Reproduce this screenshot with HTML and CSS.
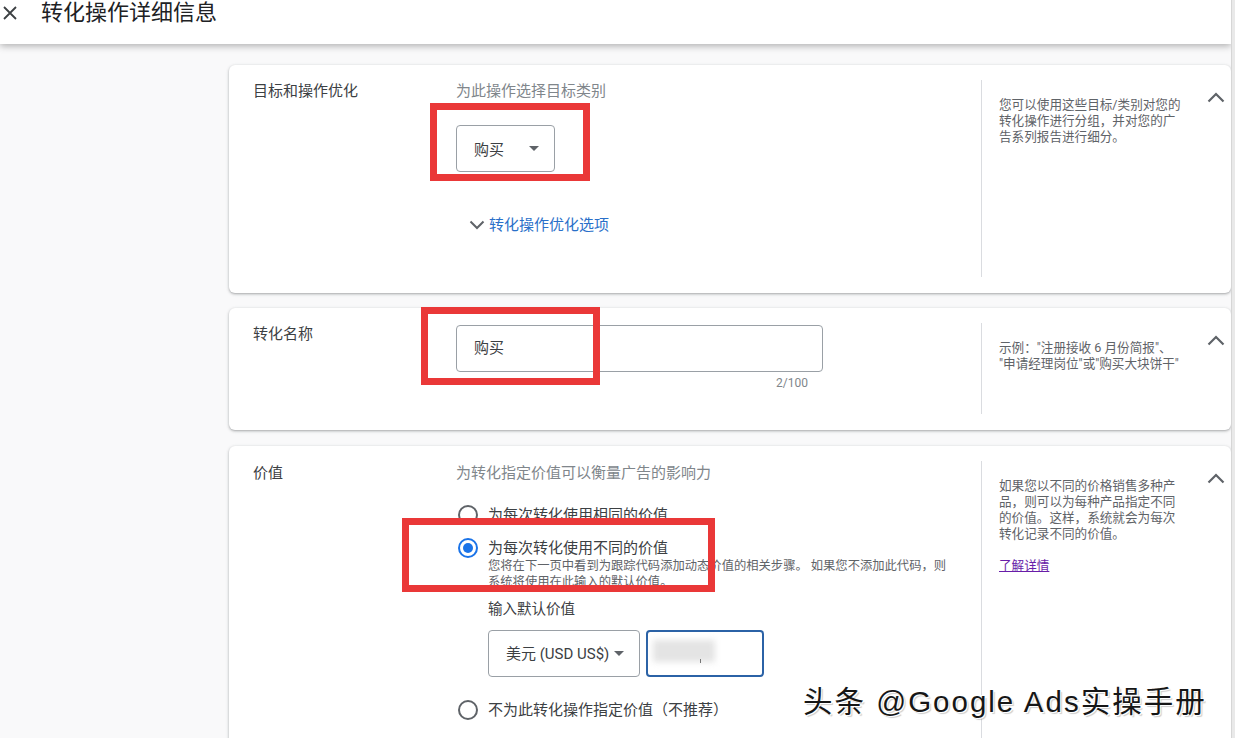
FILE: index.html
```html
<!DOCTYPE html>
<html lang="zh-CN">
<head>
    <meta charset="UTF-8">
    <title>转化操作详细信息</title>
    <link rel="stylesheet" href="styles.css">
</head>
<body>
    <div class="page">
        <div class="topbar">
            <svg class="close" width="16" height="16" viewBox="0 0 16 16">
                <path d="M2 2L14 14M14 2L2 14" stroke="#3c4043" stroke-width="1.8" fill="none"/>
            </svg>
            <span class="title">转化操作详细信息</span>
        </div>

        <div class="content">
            <!-- 目标和操作优化 -->
            <div class="card card-goal">
                <div class="label">目标和操作优化</div>
                <div class="main">
                    <div class="hint">为此操作选择目标类别</div>
                    <div class="select select-goal">
                        <span>购买</span>
                        <i class="caret"></i>
                    </div>
                    <div class="expand">
                        <svg width="16" height="10" viewBox="0 0 16 10">
                            <path d="M1.5 1.5L8 8L14.5 1.5" stroke="#5f6368" stroke-width="2" fill="none"/>
                        </svg>
                        <span>转化操作优化选项</span>
                    </div>
                </div>
                <div class="aside">
                    <p>您可以使用这些目标/类别对您的<br>转化操作进行分组，并对您的广<br>告系列报告进行细分。</p>
                    <svg class="up" width="18" height="11" viewBox="0 0 18 11">
                        <path d="M1.5 9.5L9 2L16.5 9.5" stroke="#5f6368" stroke-width="2.2" fill="none"/>
                    </svg>
                </div>
            </div>

            <!-- 转化名称 -->
            <div class="card card-name">
                <div class="label">转化名称</div>
                <div class="main">
                    <div class="textbox">购买</div>
                    <div class="counter">2/100</div>
                </div>
                <div class="aside">
                    <p>示例："注册接收 6 月份简报"、<br>"申请经理岗位"或"购买大块饼干"</p>
                    <svg class="up" width="18" height="11" viewBox="0 0 18 11">
                        <path d="M1.5 9.5L9 2L16.5 9.5" stroke="#5f6368" stroke-width="2.2" fill="none"/>
                    </svg>
                </div>
            </div>

            <!-- 价值 -->
            <div class="card card-value">
                <div class="label">价值</div>
                <div class="main">
                    <div class="hint">为转化指定价值可以衡量广告的影响力</div>
                    <div class="option first">
                        <span class="radio"></span>
                        <span class="option-text">为每次转化使用相同的价值</span>
                    </div>
                    <div class="option second">
                        <span class="radio checked"></span>
                        <div>
                            <div class="option-text">为每次转化使用不同的价值</div>
                            <div class="desc">您将在下一页中看到为跟踪代码添加动态价值的相关步骤。 如果您不添加此代码，则<br>系统将使用在此输入的默认价值。</div>
                            <div class="field-label">输入默认价值</div>
                            <div class="money">
                                <div class="select select-currency">
                                    <span>美元 (USD US$)</span>
                                    <i class="caret"></i>
                                </div>
                                <div class="amount">
                                    <span class="blur"></span>
                                    <span class="tick"></span>
                                </div>
                            </div>
                        </div>
                    </div>
                    <div class="option third">
                        <span class="radio"></span>
                        <span class="option-text">不为此转化操作指定价值（不推荐）</span>
                    </div>
                </div>
                <div class="aside">
                    <div>
                        <p>如果您以不同的价格销售多种产<br>品，则可以为每种产品指定不同<br>的价值。这样，系统就会为每次<br>转化记录不同的价值。</p>
                        <a class="more" href="#">了解详情</a>
                    </div>
                    <svg class="up" width="18" height="11" viewBox="0 0 18 11">
                        <path d="M1.5 9.5L9 2L16.5 9.5" stroke="#5f6368" stroke-width="2.2" fill="none"/>
                    </svg>
                </div>
            </div>
        </div>

        <!-- 标注框 -->
        <div class="mark mark1"></div>
        <div class="mark mark2"></div>
        <div class="mark mark3"></div>

        <div class="watermark">头条 @Google Ads实操手册</div>
    </div>
</body>
</html>
```

FILE: styles.css
```css
* {
    margin: 0;
    padding: 0;
    box-sizing: border-box;
}

body {
    background-color: #e9e9e9;
    font-family: Roboto, "Noto Sans CJK SC", sans-serif;
    color: #3c4043;
    overflow: hidden;
}

.page {
    position: relative;
    width: 1232px;
    height: 738px;
    background-color: #f9f9fa;
    border-right: 1px solid #d6d6d6;
    overflow: hidden;
}

.topbar {
    display: flex;
    align-items: center;
    height: 44px;
    padding: 0 0 18px 2px;
    background-color: #fff;
    box-shadow: 0 2px 7px rgba(0, 0, 0, 0.3);
    position: relative;
    z-index: 1;
}

.close {
    display: block;
}

.title {
    margin-left: 23px;
    font-size: 22px;
    line-height: 26px;
    color: #202124;
}

.content {
    padding: 21px 0 0 229px;
}

.card {
    display: flex;
    background-color: #fff;
    border-radius: 6px;
    box-shadow: 0 1px 2px rgba(60, 64, 67, 0.3), 0 1px 3px 1px rgba(60, 64, 67, 0.12);
    margin-bottom: 15px;
    padding-left: 24px;
}

.card-goal {
    height: 228px;
}

.card-name {
    height: 122px;
}

.card-value {
    height: 330px;
    margin-top: 16px;
}

.label {
    width: 203px;
    padding-top: 16px;
    font-size: 15px;
    line-height: 20px;
    color: #3c4043;
}

.main {
    width: 525px;
    padding-top: 16px;
}

.card-value .label,
.card-value .main {
    padding-top: 17px;
}

.hint {
    font-size: 15px;
    line-height: 20px;
    color: #80868b;
}

.select {
    display: flex;
    align-items: center;
    justify-content: space-between;
    height: 47px;
    padding: 0 15px 0 17px;
    border: 1px solid #9aa0a6;
    border-radius: 4px;
    font-size: 15px;
    color: #3c4043;
}

.select-goal {
    width: 99px;
    margin-top: 24px;
}

.caret {
    width: 0;
    height: 0;
    border-left: 5px solid transparent;
    border-right: 5px solid transparent;
    border-top: 5px solid #5f6368;
}

.expand {
    display: flex;
    align-items: center;
    gap: 4px;
    margin-top: 43px;
    padding-left: 13px;
    font-size: 15px;
    line-height: 20px;
    color: #2a6fc9;
}

.aside {
    flex: 1;
    display: flex;
    justify-content: space-between;
    margin: 15px 0 16px;
    padding: 17px 6px 0 17px;
    border-left: 1px solid #dadce0;
    font-size: 12.6px;
    line-height: 16px;
    color: #5f6368;
}

.up {
    margin-top: -5px;
}

.more {
    display: inline-block;
    margin-top: 16px;
    color: #681da8;
}

.textbox {
    width: 367px;
    height: 47px;
    margin-top: 1px;
    padding: 0 17px;
    border: 1px solid #9aa0a6;
    border-radius: 4px;
    font-size: 15px;
    line-height: 45px;
    color: #3c4043;
}

.counter {
    width: 367px;
    padding-right: 15px;
    margin-top: 3px;
    text-align: right;
    font-size: 12px;
    line-height: 16px;
    color: #80868b;
}

.option {
    display: flex;
    align-items: flex-start;
    gap: 8px;
    font-size: 15px;
    line-height: 20px;
}

.option.first {
    margin-top: 22px;
}

.option.second {
    margin-top: 13px;
}

.option.third {
    margin-top: 23px;
}

.radio {
    flex: none;
    width: 20px;
    height: 20px;
    margin: 0 2px;
    border: 2px solid #5f6368;
    border-radius: 50%;
}

.radio.checked {
    border-color: #1a73e8;
    position: relative;
}

.radio.checked::after {
    content: "";
    position: absolute;
    left: 3px;
    top: 3px;
    width: 10px;
    height: 10px;
    border-radius: 50%;
    background-color: #1a73e8;
}

.option-text {
    color: #3c4043;
}

.desc {
    font-size: 12.3px;
    line-height: 16px;
    color: #5f6368;
}

.field-label {
    margin-top: 10px;
    font-size: 14.5px;
    line-height: 20px;
    color: #3c4043;
}

.money {
    display: flex;
    gap: 6px;
    margin-top: 10px;
}

.select-currency {
    width: 152px;
}

.amount {
    position: relative;
    width: 118px;
    height: 47px;
    border: 2px solid #2b62a6;
    border-radius: 4px;
}

.blur {
    position: absolute;
    left: 5px;
    top: 8px;
    width: 62px;
    height: 22px;
    background-color: #e4e4e4;
    filter: blur(3px);
}

.tick {
    position: absolute;
    left: 52px;
    top: 27px;
    width: 1px;
    height: 4px;
    background-color: #777;
}

.mark {
    position: absolute;
    border: 7px solid #ea3838;
}

.mark1 {
    left: 430px;
    top: 103px;
    width: 160px;
    height: 78px;
}

.mark2 {
    left: 421px;
    top: 307px;
    width: 179px;
    height: 78px;
}

.mark3 {
    left: 402px;
    top: 518px;
    width: 313px;
    height: 74px;
}

.watermark {
    position: absolute;
    left: 803px;
    top: 684px;
    font-family: "Liberation Sans", "Noto Sans CJK SC", sans-serif;
    font-size: 29.5px;
    letter-spacing: 2px;
    line-height: 36px;
    color: #161616;
    text-shadow: -1px -1px 0 #fff, 1px 1px 0 #fff, 2px 2px 1px rgba(0, 0, 0, 0.2);
    white-space: nowrap;
}
```
